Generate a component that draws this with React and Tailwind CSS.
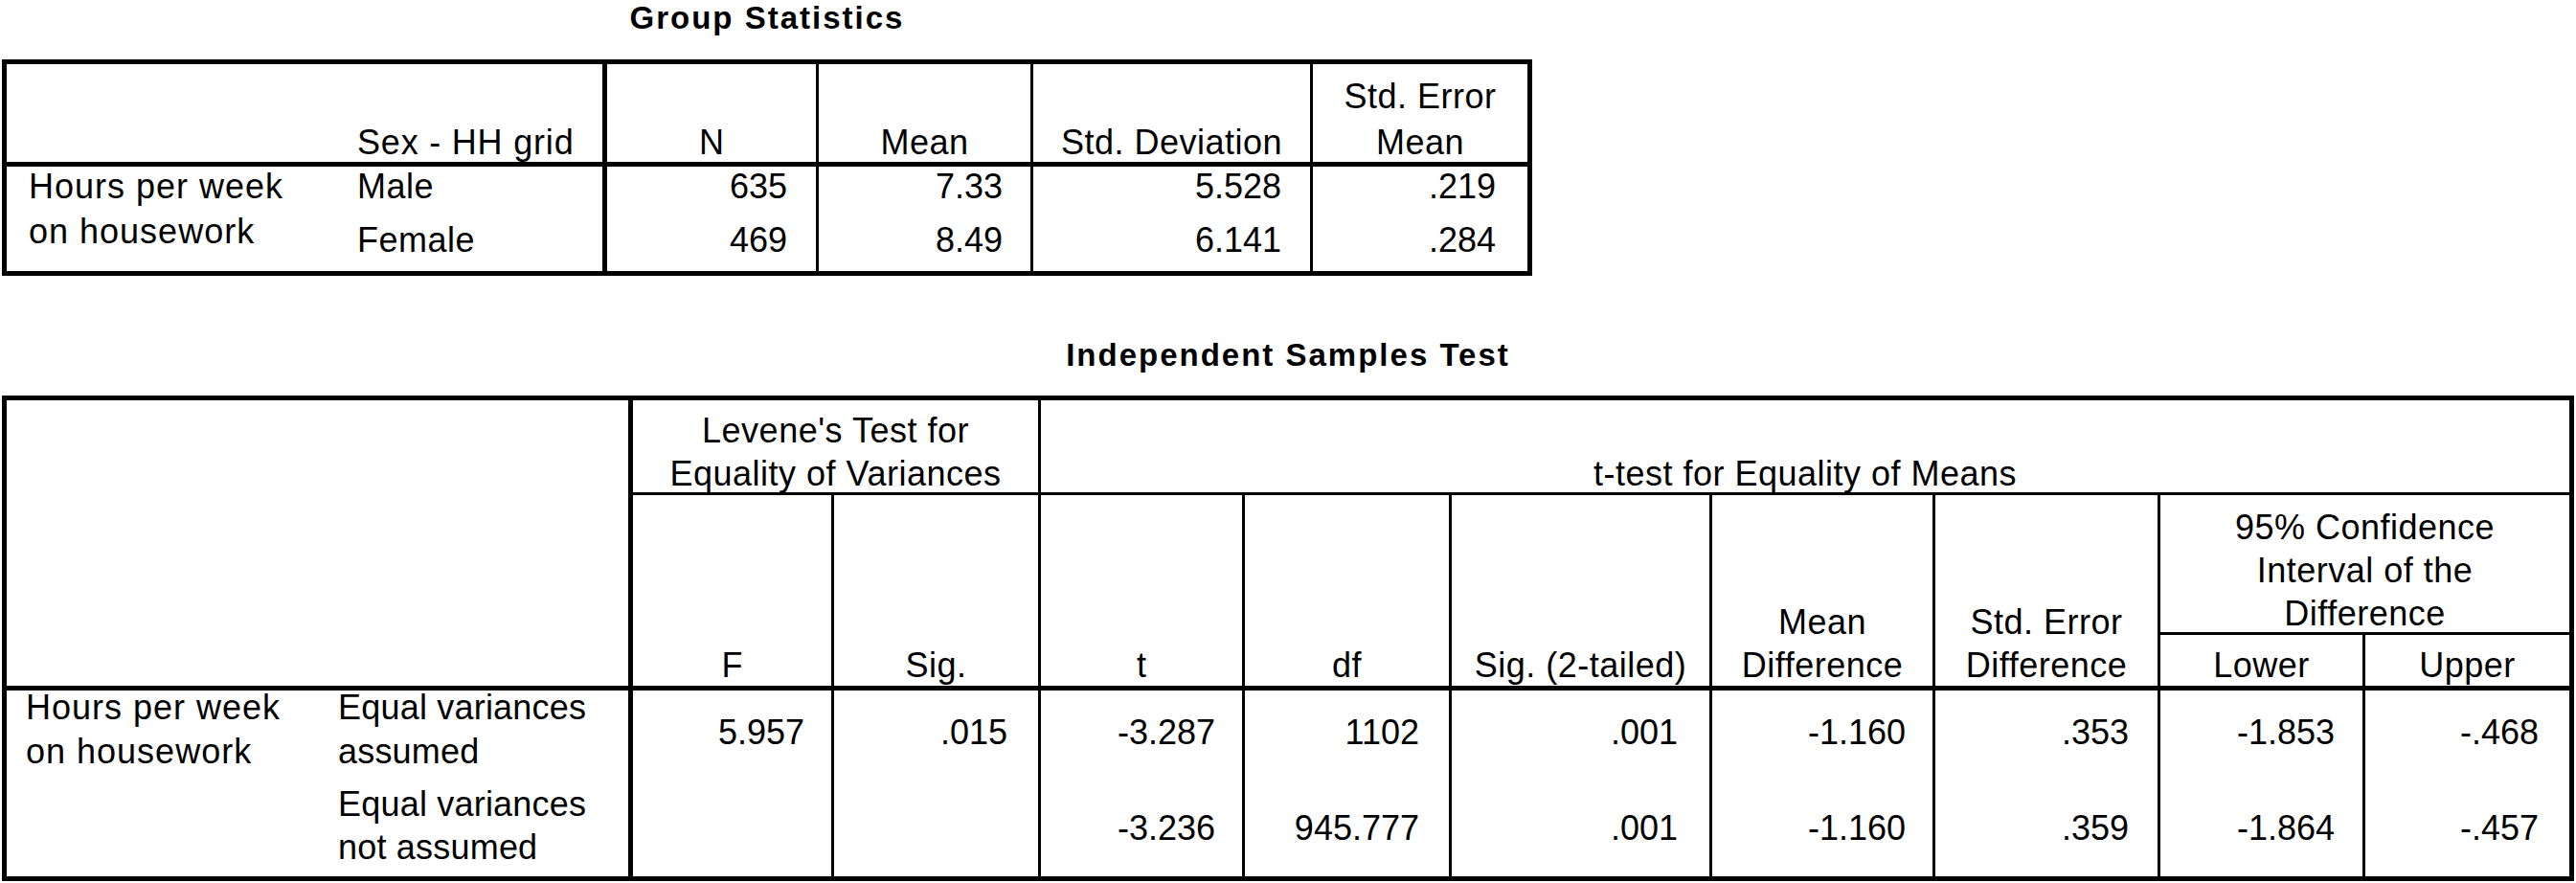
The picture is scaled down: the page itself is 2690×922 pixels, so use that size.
export default function App() {
  const font = "font-['Liberation_Sans',Arial,Helvetica,sans-serif]";
  return (
    <div className={`w-[2690px] h-[922px] overflow-hidden bg-white text-black ${font} text-[36px]`}>
      {/* Group Statistics */}
      <div className="ml-[2px] w-[1598px]">
        <div className="h-[37px] text-center text-[33px] font-bold leading-[37px] tracking-[2px]">Group Statistics</div>
        <div className="mt-[25px] grid h-[226px] grid-cols-[343px_284px_221px_224px_292px_224px] grid-rows-[107px_57px_52px] border-[5px] border-black">
          {/* header */}
          <div className="col-start-1 row-start-1 border-b-[5px] border-black" />
          <div className="col-start-2 row-start-1 flex flex-col justify-end border-b-[5px] border-r-[5px] border-black pb-[2px] pl-[23px] tracking-[0.8px]">
            <div className="leading-[36px]">Sex - HH grid</div>
          </div>
          <div className="col-start-3 row-start-1 flex flex-col items-center justify-end border-b-[5px] border-r-[3px] border-black pb-[2px]">
            <div className="leading-[36px]">N</div>
          </div>
          <div className="col-start-4 row-start-1 flex flex-col items-center justify-end border-b-[5px] border-r-[3px] border-black pb-[2px] tracking-[0.5px]">
            <div className="leading-[36px]">Mean</div>
          </div>
          <div className="col-start-5 row-start-1 flex flex-col items-center justify-end border-b-[5px] border-r-[3px] border-black pb-[2px] tracking-[0.5px]">
            <div className="leading-[36px]">Std. Deviation</div>
          </div>
          <div className="col-start-6 row-start-1 flex flex-col items-center justify-end gap-[12px] border-b-[5px] border-black pb-[2px] tracking-[0.5px]">
            <div className="leading-[36px]">Std. Error</div>
            <div className="leading-[36px]">Mean</div>
          </div>

          {/* data */}
          <div className="col-start-1 row-start-2 row-span-2 flex flex-col gap-[11px] pl-[23px] pt-[3px] tracking-[1px]">
            <div className="leading-[36px]">Hours per week</div>
            <div className="leading-[36px]">on housework</div>
          </div>
          <div className="col-start-2 row-start-2 border-r-[5px] border-black pl-[23px] pt-[3px] tracking-[0.5px]">
            <div className="leading-[36px]">Male</div>
          </div>
          <div className="col-start-3 row-start-2 border-r-[3px] border-black pr-[30px] pt-[3px] text-right">
            <div className="leading-[36px]">635</div>
          </div>
          <div className="col-start-4 row-start-2 border-r-[3px] border-black pr-[29px] pt-[3px] text-right">
            <div className="leading-[36px]">7.33</div>
          </div>
          <div className="col-start-5 row-start-2 border-r-[3px] border-black pr-[30px] pt-[3px] text-right">
            <div className="leading-[36px]">5.528</div>
          </div>
          <div className="col-start-6 row-start-2 pr-[33px] pt-[3px] text-right">
            <div className="leading-[36px]">.219</div>
          </div>

          <div className="col-start-2 row-start-3 border-r-[5px] border-black pl-[23px] pt-[2px] tracking-[0.5px]">
            <div className="leading-[36px]">Female</div>
          </div>
          <div className="col-start-3 row-start-3 border-r-[3px] border-black pr-[30px] pt-[2px] text-right">
            <div className="leading-[36px]">469</div>
          </div>
          <div className="col-start-4 row-start-3 border-r-[3px] border-black pr-[29px] pt-[2px] text-right">
            <div className="leading-[36px]">8.49</div>
          </div>
          <div className="col-start-5 row-start-3 border-r-[3px] border-black pr-[30px] pt-[2px] text-right">
            <div className="leading-[36px]">6.141</div>
          </div>
          <div className="col-start-6 row-start-3 pr-[33px] pt-[2px] text-right">
            <div className="leading-[36px]">.284</div>
          </div>
        </div>
      </div>

      {/* Independent Samples Test */}
      <div className="ml-[2px] mt-[65px] w-[2686px]">
        <div className="h-[36px] text-center text-[33px] font-bold leading-[36px] tracking-[2px]">Independent Samples Test</div>
        <div className="mt-[24px] grid h-[507px] grid-cols-[323px_331px_210px_216px_213px_216px_272px_233px_235px_214px_213px] grid-rows-[99px_146px_58px_97px_97px] border-[5px] border-black">
          {/* header */}
          <div className="col-start-1 col-span-2 row-start-1 row-span-3 border-b-[5px] border-r-[5px] border-black" />
          <div className="col-start-3 col-span-2 row-start-1 flex flex-col items-center justify-end gap-[9px] border-b-[3px] border-r-[3px] border-black pb-[1px] tracking-[0.5px]">
            <div className="leading-[36px]">Levene's Test for</div>
            <div className="leading-[36px]">Equality of Variances</div>
          </div>
          <div className="col-start-5 col-span-7 row-start-1 flex flex-col items-center justify-end border-b-[3px] border-black pb-[1px] tracking-[0.5px]">
            <div className="leading-[36px]">t-test for Equality of Means</div>
          </div>

          <div className="col-start-3 row-start-2 row-span-2 flex flex-col items-center justify-end border-b-[5px] border-r-[3px] border-black pb-[3px]">
            <div className="leading-[36px]">F</div>
          </div>
          <div className="col-start-4 row-start-2 row-span-2 flex flex-col items-center justify-end border-b-[5px] border-r-[3px] border-black pb-[3px] tracking-[0.5px]">
            <div className="leading-[36px]">Sig.</div>
          </div>
          <div className="col-start-5 row-start-2 row-span-2 flex flex-col items-center justify-end border-b-[5px] border-r-[3px] border-black pb-[3px]">
            <div className="leading-[36px]">t</div>
          </div>
          <div className="col-start-6 row-start-2 row-span-2 flex flex-col items-center justify-end border-b-[5px] border-r-[3px] border-black pb-[3px] tracking-[0.5px]">
            <div className="leading-[36px]">df</div>
          </div>
          <div className="col-start-7 row-start-2 row-span-2 flex flex-col items-center justify-end border-b-[5px] border-r-[3px] border-black pb-[3px] tracking-[0.5px]">
            <div className="leading-[36px]">Sig. (2-tailed)</div>
          </div>
          <div className="col-start-8 row-start-2 row-span-2 flex flex-col items-center justify-end gap-[9px] border-b-[5px] border-r-[3px] border-black pb-[3px] tracking-[0.5px]">
            <div className="leading-[36px]">Mean</div>
            <div className="leading-[36px]">Difference</div>
          </div>
          <div className="col-start-9 row-start-2 row-span-2 flex flex-col items-center justify-end gap-[9px] border-b-[5px] border-r-[3px] border-black pb-[3px] tracking-[0.5px]">
            <div className="leading-[36px]">Std. Error</div>
            <div className="leading-[36px]">Difference</div>
          </div>
          <div className="col-start-10 col-span-2 row-start-2 flex flex-col items-center justify-end gap-[9px] border-b-[3px] border-black pb-[1px] tracking-[0.5px]">
            <div className="leading-[36px]">95% Confidence</div>
            <div className="leading-[36px]">Interval of the</div>
            <div className="leading-[36px]">Difference</div>
          </div>
          <div className="col-start-10 row-start-3 flex flex-col items-center justify-end border-b-[5px] border-r-[3px] border-black pb-[3px] tracking-[0.5px]">
            <div className="leading-[36px]">Lower</div>
          </div>
          <div className="col-start-11 row-start-3 flex flex-col items-center justify-end border-b-[5px] border-black pb-[3px] tracking-[0.5px]">
            <div className="leading-[36px]">Upper</div>
          </div>

          {/* data row 1 */}
          <div className="col-start-1 row-start-4 row-span-2 flex flex-col gap-[10px] pl-[20px] tracking-[1px]">
            <div className="leading-[36px]">Hours per week</div>
            <div className="leading-[36px]">on housework</div>
          </div>
          <div className="col-start-2 row-start-4 flex flex-col gap-[10px] border-r-[5px] border-black pl-[23px] tracking-[0.2px]">
            <div className="leading-[36px]">Equal variances</div>
            <div className="leading-[36px]">assumed</div>
          </div>
          <div className="col-start-3 row-start-4 border-r-[3px] border-black pr-[28px] pt-[26px] text-right leading-[36px]">5.957</div>
          <div className="col-start-4 row-start-4 border-r-[3px] border-black pr-[32px] pt-[26px] text-right leading-[36px]">.015</div>
          <div className="col-start-5 row-start-4 border-r-[3px] border-black pr-[28px] pt-[26px] text-right leading-[36px]">-3.287</div>
          <div className="col-start-6 row-start-4 border-r-[3px] border-black pr-[31px] pt-[26px] text-right leading-[36px]">1102</div>
          <div className="col-start-7 row-start-4 border-r-[3px] border-black pr-[33px] pt-[26px] text-right leading-[36px]">.001</div>
          <div className="col-start-8 row-start-4 border-r-[3px] border-black pr-[28px] pt-[26px] text-right leading-[36px]">-1.160</div>
          <div className="col-start-9 row-start-4 border-r-[3px] border-black pr-[30px] pt-[26px] text-right leading-[36px]">.353</div>
          <div className="col-start-10 row-start-4 border-r-[3px] border-black pr-[29px] pt-[26px] text-right leading-[36px]">-1.853</div>
          <div className="col-start-11 row-start-4 pr-[32px] pt-[26px] text-right leading-[36px]">-.468</div>

          {/* data row 2 */}
          <div className="col-start-2 row-start-5 flex flex-col gap-[9px] border-r-[5px] border-black pl-[23px] pt-[4px] tracking-[0.2px]">
            <div className="leading-[36px]">Equal variances</div>
            <div className="leading-[36px]">not assumed</div>
          </div>
          <div className="col-start-3 row-start-5 border-r-[3px] border-black" />
          <div className="col-start-4 row-start-5 border-r-[3px] border-black" />
          <div className="col-start-5 row-start-5 border-r-[3px] border-black pr-[28px] pt-[29px] text-right leading-[36px]">-3.236</div>
          <div className="col-start-6 row-start-5 border-r-[3px] border-black pr-[31px] pt-[29px] text-right leading-[36px]">945.777</div>
          <div className="col-start-7 row-start-5 border-r-[3px] border-black pr-[33px] pt-[29px] text-right leading-[36px]">.001</div>
          <div className="col-start-8 row-start-5 border-r-[3px] border-black pr-[28px] pt-[29px] text-right leading-[36px]">-1.160</div>
          <div className="col-start-9 row-start-5 border-r-[3px] border-black pr-[30px] pt-[29px] text-right leading-[36px]">.359</div>
          <div className="col-start-10 row-start-5 border-r-[3px] border-black pr-[29px] pt-[29px] text-right leading-[36px]">-1.864</div>
          <div className="col-start-11 row-start-5 pr-[32px] pt-[29px] text-right leading-[36px]">-.457</div>
        </div>
      </div>
    </div>
  );
}
